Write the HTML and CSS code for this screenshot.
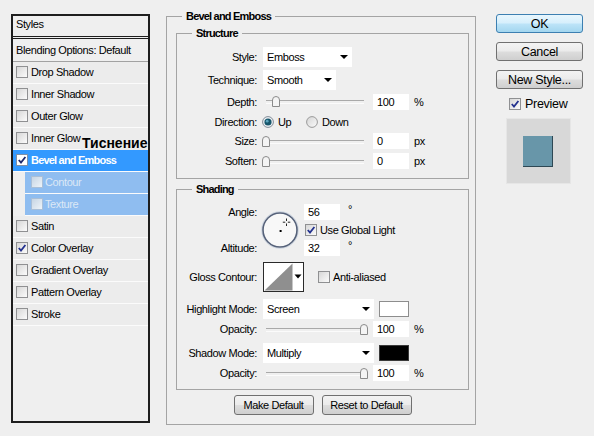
FILE: index.html
```html
<!DOCTYPE html>
<html>
<head>
<meta charset="utf-8">
<title>Layer Style</title>
<link rel="stylesheet" href="styles.css">
</head>
<body>
<div class="dialog">
  <div class="styles-list">
    <div class="list-head">Styles</div>
    <div class="list-blend">Blending Options: Default</div>
    <div class="fx"><span class="cb"></span>Drop Shadow</div>
    <div class="fx"><span class="cb"></span>Inner Shadow</div>
    <div class="fx"><span class="cb"></span>Outer Glow</div>
    <div class="fx"><span class="cb"></span>Inner Glow</div>
    <div class="fx sel"><span class="cb on"><svg viewBox="0 0 10 10" width="10" height="10"><path d="M1.8 5 L4 7.6 L8.4 2" fill="none" stroke="#1e2a6e" stroke-width="1.8"/></svg></span>Bevel and Emboss</div>
    <div class="fx sub"><span class="cb"></span>Contour</div>
    <div class="fx sub"><span class="cb"></span>Texture</div>
    <div class="fx"><span class="cb"></span>Satin</div>
    <div class="fx"><span class="cb on"><svg viewBox="0 0 10 10" width="10" height="10"><path d="M1.8 5 L4 7.6 L8.4 2" fill="none" stroke="#23328f" stroke-width="1.8"/></svg></span>Color Overlay</div>
    <div class="fx"><span class="cb"></span>Gradient Overlay</div>
    <div class="fx"><span class="cb"></span>Pattern Overlay</div>
    <div class="fx"><span class="cb"></span>Stroke</div>
    <div class="note">Тиснение</div>
  </div>

  <fieldset class="group main">
    <legend>Bevel and Emboss</legend>
    <div class="main-body">
      <fieldset class="group structure">
        <legend>Structure</legend>
        <div class="struct-grid">
          <div class="lbl">Style:</div>
          <div class="ctl"><div class="select w-style">Emboss</div></div>

          <div class="lbl">Technique:</div>
          <div class="ctl"><div class="select w-tech">Smooth</div></div>

          <div class="lbl">Depth:</div>
          <div class="ctl">
            <div class="slider"><svg class="thumb" style="left:9px" width="8" height="11" viewBox="0 0 8 11"><path d="M0.5 10.5 V4 Q0.5 0.5 4 0.5 Q7.5 0.5 7.5 4 V10.5 Z" fill="#f4f4f4" stroke="#8a8a8a"/></svg></div>
            <div class="num">100</div><span class="unit">%</span>
          </div>

          <div class="lbl">Direction:</div>
          <div class="ctl">
            <span class="radio-opt first"><svg width="12" height="12" viewBox="0 0 12 12"><circle cx="6" cy="6" r="5.4" fill="#eef1f4" stroke="#7f8a96"/><circle cx="6" cy="6" r="3.6" fill="#17566b"/><circle cx="5.2" cy="5.2" r="1.4" fill="#5aa4bd"/></svg>Up</span>
            <span class="radio-opt"><svg width="12" height="12" viewBox="0 0 12 12"><defs><linearGradient id="rg" x1="0" y1="0" x2="1" y2="1"><stop offset="0" stop-color="#d4d4d4"/><stop offset="1" stop-color="#fbfbfb"/></linearGradient></defs><circle cx="6" cy="6" r="5.4" fill="url(#rg)" stroke="#9a9a9a"/></svg>Down</span>
          </div>

          <div class="lbl">Size:</div>
          <div class="ctl">
            <div class="slider"><svg class="thumb" style="left:-1px" width="8" height="11" viewBox="0 0 8 11"><path d="M0.5 10.5 V4 Q0.5 0.5 4 0.5 Q7.5 0.5 7.5 4 V10.5 Z" fill="#f4f4f4" stroke="#8a8a8a"/></svg></div>
            <div class="num">0</div><span class="unit">px</span>
          </div>

          <div class="lbl">Soften:</div>
          <div class="ctl">
            <div class="slider"><svg class="thumb" style="left:-1px" width="8" height="11" viewBox="0 0 8 11"><path d="M0.5 10.5 V4 Q0.5 0.5 4 0.5 Q7.5 0.5 7.5 4 V10.5 Z" fill="#f4f4f4" stroke="#8a8a8a"/></svg></div>
            <div class="num">0</div><span class="unit">px</span>
          </div>
        </div>
      </fieldset>

      <fieldset class="group shading">
        <legend>Shading</legend>
        <div class="shade-body">
          <div class="angle-grid">
            <div class="lbl a-lbl a1">Angle:</div>
            <div class="lbl a-lbl a3">Altitude:</div>
            <div class="dial">
              <svg width="38" height="38" viewBox="0 0 38 38">
                <circle cx="19" cy="19" r="18.3" fill="none" stroke="#cdd6e2" stroke-width="1"/>
                <circle cx="19" cy="19" r="17" fill="#f8f8f8" stroke="#56627a" stroke-width="1.6"/>
                <rect x="18.6" y="19" width="2" height="2" fill="#000"/>
                <path d="M25.5 7.5 V10 M25.5 12.5 V15 M21.8 11.2 H24.3 M26.8 11.2 H29.3" stroke="#222" stroke-width="1"/>
              </svg>
            </div>
            <div class="ctl c1"><div class="num">56</div><span class="deg">°</span></div>
            <div class="ctl c2"><span class="cb"><svg viewBox="0 0 10 10" width="10" height="10"><path d="M1.8 5 L4 7.6 L8.4 2" fill="none" stroke="#23328f" stroke-width="1.8"/></svg></span>Use Global Light</div>
            <div class="ctl c3"><div class="num">32</div><span class="deg">°</span></div>
          </div>

          <div class="row r-gloss">
            <div class="lbl">Gloss Contour:</div>
            <svg class="contour" width="41" height="30" viewBox="0 0 41 30">
              <rect x="0.5" y="0.5" width="40" height="29" fill="#fff" stroke="#2a2a2a"/>
              <polygon points="1.5,28.5 29.5,1.5 29.5,28.5" fill="#8f8f8f"/>
              <polygon points="31.5,12.5 38.5,12.5 35,16.5" fill="#000"/>
            </svg>
            <span class="cb aa"></span><span>Anti-aliased</span>
          </div>

          <div class="row r-mode">
            <div class="lbl">Highlight Mode:</div>
            <div class="select w-mode">Screen</div>
            <div class="swatch white"></div>
          </div>
          <div class="row r-op">
            <div class="lbl">Opacity:</div>
            <div class="slider"><svg class="thumb" style="left:97px" width="8" height="11" viewBox="0 0 8 11"><path d="M0.5 10.5 V4 Q0.5 0.5 4 0.5 Q7.5 0.5 7.5 4 V10.5 Z" fill="#f4f4f4" stroke="#8a8a8a"/></svg></div>
            <div class="num">100</div><span class="unit">%</span>
          </div>
          <div class="row r-mode r-shadow">
            <div class="lbl">Shadow Mode:</div>
            <div class="select w-mode">Multiply</div>
            <div class="swatch black"></div>
          </div>
          <div class="row r-op">
            <div class="lbl">Opacity:</div>
            <div class="slider"><svg class="thumb" style="left:97px" width="8" height="11" viewBox="0 0 8 11"><path d="M0.5 10.5 V4 Q0.5 0.5 4 0.5 Q7.5 0.5 7.5 4 V10.5 Z" fill="#f4f4f4" stroke="#8a8a8a"/></svg></div>
            <div class="num">100</div><span class="unit">%</span>
          </div>
        </div>
      </fieldset>

      <div class="defaults">
        <div class="btn small w-make">Make Default</div>
        <div class="btn small w-reset">Reset to Default</div>
      </div>
    </div>
  </fieldset>

  <div class="side">
    <div class="btn big ok">OK</div>
    <div class="btn big">Cancel</div>
    <div class="btn big">New Style...</div>
    <div class="preview-row"><span class="cb"><svg viewBox="0 0 10 10" width="10" height="10"><path d="M1.8 5 L4 7.6 L8.4 2" fill="none" stroke="#23328f" stroke-width="1.8"/></svg></span>Preview</div>
    <div class="preview-box"><div class="preview-swatch"></div></div>
  </div>
</div>
</body>
</html>
```
FILE: styles.css
```css
* { box-sizing: border-box; }
html, body { margin: 0; padding: 0; }
body {
  width: 594px;
  height: 436px;
  overflow: hidden;
  background: #efefef;
  font-family: "Liberation Sans", Arial, sans-serif;
  font-size: 11px;
  letter-spacing: -0.4px;
  color: #000;
}
.dialog {
  display: flex;
  align-items: flex-start;
  padding-left: 11px;
}

/* ---------- styles list ---------- */
.styles-list {
  position: relative;
  flex: none;
  margin-top: 14px;
  width: 139px;
  height: 409px;
  border: 2px solid #1e1e1e;
  background: #efefef;
}
.list-head {
  height: 23px;
  border-bottom: 3px double #1e1e1e;
  padding-left: 3px;
  line-height: 17px;
}
.list-blend {
  height: 23px;
  border-bottom: 1px solid #a2a2a2;
  padding-left: 3px;
  line-height: 22px;
}
.fx {
  height: 22px;
  border-bottom: 1px solid #fbfbfb;
  display: flex;
  align-items: center;
  padding-left: 3px;
  padding-bottom: 1px;
  background: #ececec;
}
.fx .cb { margin-right: 3px; }
.fx.sel {
  background: #3399ff;
  color: #fff;
  font-weight: bold;
  letter-spacing: -0.8px;
}
.fx.sel .cb { background: #fff; border-color: #7d8fa8; }
.fx.sub {
  margin-left: 12px;
  padding-left: 6px;
  background: #8fbdf0;
  color: #dce8f6;
}
.fx.sub .cb { margin-right: 2px; border-color: #a9bfd8; background: linear-gradient(135deg, #c7d5e4, #eef3f8); }
.note {
  position: absolute;
  left: 68px;
  top: 120px;
  font-size: 14px;
  line-height: 14px;
  font-weight: bold;
  letter-spacing: 0;
  background: #ececec;
  padding-left: 1px;
}

/* ---------- checkbox ---------- */
.cb {
  flex: none;
  width: 12px;
  height: 12px;
  border: 1px solid #8f9092;
  background: linear-gradient(135deg, #d7d7d7, #fbfbfb);
  display: inline-flex;
  align-items: center;
  justify-content: center;
}
.cb svg { display: block; }

/* ---------- fieldsets ---------- */
fieldset.group {
  margin: 0;
  padding: 0;
  min-width: 0;
  border: 1px solid #a4a4a4;
}
fieldset.group > legend {
  padding: 0 4px;
  margin-left: 15px;
  font-weight: bold;
  letter-spacing: -0.8px;
  line-height: 12px;
}
fieldset.main {
  flex: none;
  margin-left: 16px;
  margin-top: 10px;
  width: 310px;
  height: 415px;
}
.main-body { padding: 5px 6px 0 9px; }
fieldset.structure { height: 152px; }
fieldset.shading { margin-top: 4px; height: 207px; }

.lbl {
  flex: none;
  width: 80px;
  margin-right: 6px;
  text-align: right;
  white-space: nowrap;
}
.ctl {
  display: flex;
  align-items: center;
  white-space: nowrap;
}

.struct-grid {
  padding-top: 7px;
  display: grid;
  grid-template-columns: 86px 1fr;
  grid-template-rows: 22px 23px 21px 19px 20px 20px;
  align-items: center;
}
.struct-grid .lbl { width: auto; margin-right: 0; padding-right: 6px; }

.select {
  position: relative;
  flex: none;
  height: 20px;
  background: #fff;
  padding-left: 4px;
  display: flex;
  align-items: center;
}
.select::after {
  content: "";
  position: absolute;
  right: 4px;
  top: 8px;
  border-left: 4px solid transparent;
  border-right: 4px solid transparent;
  border-top: 4px solid #000;
}
.w-style { width: 89px; }
.w-tech { width: 73px; }
.w-mode { width: 111px; }

.num {
  flex: none;
  width: 36px;
  height: 16px;
  background: #fff;
  padding-left: 4px;
  line-height: 16px;
}
.unit { margin-left: 5px; }
.deg { margin-left: 8px; position: relative; top: -3px; }

.slider {
  position: relative;
  flex: none;
  width: 104px;
  height: 11px;
  margin-right: 6px;
}
.slider::before {
  content: "";
  position: absolute;
  left: 3px;
  right: 3px;
  top: 4px;
  height: 2px;
  border-top: 1px solid #a9a9a9;
  border-bottom: 1px solid #fbfbfb;
}
.thumb { position: absolute; top: 0; display: block; }

.radio-opt {
  display: inline-flex;
  align-items: center;
  gap: 4px;
}
.radio-opt svg { display: block; }
.radio-opt.first { width: 44px; margin-left: -1px; }

/* shading */
.shade-body { padding-top: 8px; }
.angle-grid {
  display: grid;
  grid-template-columns: 84px 43px 1fr;
  grid-template-rows: 18px 18px 18px;
  align-items: center;
}
.angle-grid .a-lbl { width: auto; margin-right: 0; padding-right: 4px; grid-column: 1; }
.angle-grid .a1 { grid-row: 1; }
.angle-grid .a3 { grid-row: 3; }
.dial { grid-column: 2; grid-row: 1 / span 3; align-self: center; }
.dial svg { display: block; }
.angle-grid .ctl { grid-column: 3; }
.angle-grid .c1 { grid-row: 1; }
.angle-grid .c2 { grid-row: 2; padding-left: 1px; }
.angle-grid .c3 { grid-row: 3; }
.angle-grid .c2 .cb { margin-right: 3px; }

.row {
  display: flex;
  align-items: center;
  white-space: nowrap;
}
.r-gloss { height: 32px; margin-top: 4px; }
.contour { display: block; flex: none; }
.cb.aa { margin-left: 14px; margin-right: 3px; }
.r-mode { height: 22px; margin-top: 5px; }
.r-shadow { margin-top: 4px; }
.r-op { height: 18px; }
.swatch {
  flex: none;
  width: 30px;
  height: 16px;
  margin-left: 5px;
  border: 1px solid #8d8d8d;
}
.swatch.white { background: #fff; }
.swatch.black { background: #000; border-color: #3a3a3a; }

.defaults {
  margin-top: 5px;
  width: 293px;
  display: flex;
  justify-content: center;
  gap: 8px;
}

/* ---------- buttons ---------- */
.btn {
  display: flex;
  align-items: center;
  justify-content: center;
  border: 1px solid #707070;
  border-radius: 3px;
  background: linear-gradient(#f3f3f3 0%, #ebebeb 48%, #dddddd 52%, #cfcfcf 100%);
  white-space: nowrap;
}
.btn.small { height: 20px; }
.w-make { width: 80px; }
.w-reset { width: 90px; }

.side {
  flex: none;
  margin-left: 20px;
  margin-top: 14px;
  width: 87px;
  display: flex;
  flex-direction: column;
}
.btn.big {
  height: 19px;
  margin-bottom: 9px;
  font-size: 12.5px;
  letter-spacing: -0.3px;
}
.btn.big:nth-child(3) { margin-bottom: 0; }
.btn.ok {
  border-color: #3c7fb1;
  background: linear-gradient(#e8f6fd 0%, #d6effc 48%, #bde4f8 52%, #a3d6ef 100%);
}
.preview-row {
  margin-top: 8px;
  height: 14px;
  padding-left: 13px;
  display: flex;
  align-items: center;
  font-size: 12.5px;
  letter-spacing: -0.3px;
}
.preview-row .cb { margin-right: 4px; }
.preview-box {
  margin-top: 7px;
  margin-left: 10px;
  width: 65px;
  height: 66px;
  background: #d8d8d8;
  border: 1px solid #e6e6e6;
  padding: 17px 0 0 16px;
}
.preview-swatch {
  width: 30px;
  height: 31px;
  background: #6896a9;
  border-right: 1px solid #2e4854;
  border-bottom: 1px solid #2e4854;
}
```
